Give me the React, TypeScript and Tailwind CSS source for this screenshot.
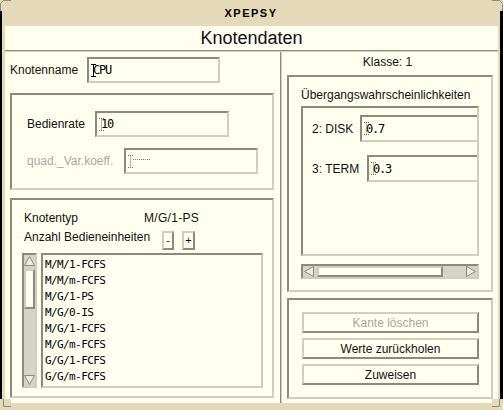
import React from "react";

// Motif-style bevels: sunken = dark top/left, light bottom/right; raised is the reverse.
const sunken =
  "border-2 border-t-[#8b8b7b] border-l-[#8b8b7b] border-b-[#cfcfbf] border-r-[#cfcfbf]";
const raised =
  "border-2 border-t-[#cfcfbf] border-l-[#cfcfbf] border-b-[#8b8b7b] border-r-[#8b8b7b]";

const mono = "font-['DejaVu_Sans_Mono',monospace]";

function Caret({ dim }: { dim?: boolean }) {
  return (
    <svg width="5" height="13" viewBox="0 0 5 13" className="shrink-0">
      <path
        d="M0 0.5H5M2.5 0.5V12.5M0 12.5H5"
        stroke={dim ? "#6f6f63" : "#000"}
        strokeWidth="1"
        strokeDasharray={dim ? "1 1" : undefined}
        fill="none"
      />
    </svg>
  );
}

function Field({
  className,
  value,
  dim,
  blank,
}: {
  className: string;
  value?: string;
  dim?: boolean;
  blank?: boolean;
}) {
  return (
    <div className={`${sunken} flex items-center pl-[2px] bg-[#fffff0] shrink-0 ${className}`}>
      <Caret dim={dim} />
      {value && (
        <span className={`-ml-[3px] ${mono} text-[12px] tracking-[-1.2px] text-black`}>
          {value}
        </span>
      )}
      {blank && <span className="w-[17px] mb-[3px] border-t border-dotted border-[#77776b]" />}
    </div>
  );
}

function ArrowUp() {
  return (
    <svg width="11" height="10" viewBox="0 0 11 10">
      <polygon points="5.5,0.5 10.5,9.5 0.5,9.5" fill="#ececdc" stroke="#8b8b7b" />
    </svg>
  );
}

function ArrowDown() {
  return (
    <svg width="11" height="10" viewBox="0 0 11 10">
      <polygon points="0.5,0.5 10.5,0.5 5.5,9.5" fill="#ececdc" stroke="#8b8b7b" />
    </svg>
  );
}

function ArrowLeft() {
  return (
    <svg width="10" height="11" viewBox="0 0 10 11">
      <polygon points="0.5,5.5 9.5,0.5 9.5,10.5" fill="#ececdc" stroke="#8b8b7b" />
    </svg>
  );
}

function ArrowRight() {
  return (
    <svg width="10" height="11" viewBox="0 0 10 11">
      <polygon points="0.5,0.5 9.5,5.5 0.5,10.5" fill="#ececdc" stroke="#8b8b7b" />
    </svg>
  );
}

function VScroll() {
  return (
    <div className={`${sunken} w-[15px] h-[135px] bg-[#d5d5c5] flex flex-col items-center shrink-0`}>
      <div className="mt-[1px]">
        <ArrowUp />
      </div>
      <div className={`${raised} mt-[3px] w-[11px] h-[40px] bg-[#fffff0]`} />
      <div className="mt-auto mb-[1px]">
        <ArrowDown />
      </div>
    </div>
  );
}

function HScroll() {
  return (
    <div className={`${sunken} mt-[8px] ml-[12px] w-[178px] h-[15px] bg-[#d5d5c5] flex items-center`}>
      <div className="ml-[1px] flex">
        <ArrowLeft />
      </div>
      <div className={`${raised} ml-[3px] w-[126px] h-[11px] bg-[#fffff0]`} />
      <div className="ml-auto mr-[1px] flex">
        <ArrowRight />
      </div>
    </div>
  );
}

const nodeTypes = [
  "M/M/1-FCFS",
  "M/M/m-FCFS",
  "M/G/1-PS",
  "M/G/0-IS",
  "M/G/1-FCFS",
  "M/G/m-FCFS",
  "G/G/1-FCFS",
  "G/G/m-FCFS",
];

function LeftColumn() {
  return (
    <div className="w-[275px] flex flex-col">
      <div className="flex items-center pt-[5px] pl-[5px]">
        <span className="w-[77px]">Knotenname</span>
        <Field className="w-[133px] h-[26px]" value="CPU" />
      </div>

      <div className={`${sunken} ml-[5px] mt-[10px] w-[264px] h-[97px] flex flex-col`}>
        <div className="flex items-center pt-[16px] pl-[15px]">
          <span className="w-[68px]">Bedienrate</span>
          <Field className="w-[134px] h-[26px]" value="10" dim />
        </div>
        <div className="flex items-center mt-[11px] pl-[15px]">
          <span className="w-[97px] text-[#a9a99b]">quad._Var.koeff.</span>
          <Field className="w-[134px] h-[26px]" dim blank />
        </div>
      </div>

      <div className={`${sunken} ml-[5px] mt-[8px] w-[264px] h-[200px] flex flex-col`}>
        <div className="flex pt-[11px] pl-[12px]">
          <span className="w-[120px]">Knotentyp</span>
          <span className="tracking-[0.3px]">M/G/1-PS</span>
        </div>
        <div className="flex items-start h-[19px] mt-[6px] pl-[12px]">
          <span className="w-[138px] -mt-[1px]">Anzahl Bedieneinheiten</span>
          <div className={`${raised} w-[12px] h-[19px] flex items-center justify-center text-[11px] leading-none`}>
            -
          </div>
          <div className={`${raised} ml-[8px] w-[13px] h-[19px] flex items-center justify-center text-[11px] leading-none`}>
            +
          </div>
        </div>
        <div className="flex mt-[3px] pl-[10px]">
          <VScroll />
          <div className={`${sunken} ml-[4px] w-[222px] h-[135px] pl-[2px] pt-[2px] flex flex-col overflow-hidden`}>
            {nodeTypes.map((t) => (
              <div key={t} className={`h-[16px] flex items-center ${mono} text-[11px] tracking-[-0.6px] text-black`}>
                {t}
              </div>
            ))}
          </div>
        </div>
      </div>
    </div>
  );
}

function RightColumn() {
  return (
    <div className="flex-1 flex flex-col">
      <div className="h-[23px] flex justify-center pt-[3px] pr-[5px]">Klasse: 1</div>

      <div className={`${sunken} ml-[5px] w-[206px] h-[217px] flex flex-col`}>
        <div className="pt-[11px] pl-[12px] whitespace-nowrap">Übergangswahrscheinlichkeiten</div>
        <div className={`${sunken} mt-[4px] ml-[12px] w-[178px] h-[150px] overflow-hidden flex flex-col`}>
          <div className="flex items-center pt-[7px] pl-[9px]">
            <span className="w-[48px] shrink-0">2: DISK</span>
            <Field className="w-[140px] h-[27px]" value="0.7" dim />
          </div>
          <div className="flex items-center mt-[13px] pl-[9px]">
            <span className="w-[55px] shrink-0">3: TERM</span>
            <Field className="w-[140px] h-[27px]" value="0.3" dim />
          </div>
        </div>
        <HScroll />
      </div>

      <div className={`${sunken} ml-[5px] mt-[6px] w-[206px] h-[101px] flex flex-col gap-[5px] pt-[12px] pl-[13px]`}>
        <div className={`${raised} w-[177px] h-[21px] flex items-center justify-center text-[#a9a99b]`}>
          Kante löschen
        </div>
        <div className={`${raised} w-[177px] h-[21px] flex items-center justify-center`}>
          Werte zurückholen
        </div>
        <div className={`${raised} w-[177px] h-[21px] flex items-center justify-center`}>
          Zuweisen
        </div>
      </div>
    </div>
  );
}

export default function App() {
  return (
    <div className="relative w-[503px] h-[410px] bg-[#e5d9b9] border-l-2 border-r-[3px] border-black flex flex-col font-['Liberation_Sans',Arial,sans-serif] text-[12px] leading-[14px] text-[#111]">
      {/* window corner resize handles */}
      <div className="absolute -left-[2px] top-0 w-[11px] h-[11px] bg-[#e5d9b9]">
        <svg width="11" height="11" viewBox="0 0 11 11">
          <path d="M0.5 11V3.5L3.5 0.5H11" stroke="#8b8b7b" fill="none" />
        </svg>
      </div>
      <div className="absolute -right-[3px] top-0 w-[11px] h-[11px] bg-[#e5d9b9]">
        <svg width="11" height="11" viewBox="0 0 11 11">
          <path d="M0 0.5H7.5L10.5 3.5V11" stroke="#8b8b7b" fill="none" />
        </svg>
      </div>
      <div className="absolute -left-[2px] bottom-0 w-[11px] h-[11px] bg-[#e5d9b9]">
        <svg width="11" height="11" viewBox="0 0 11 11">
          <path d="M3.5 0V7.5H11" stroke="#8b8b7b" fill="none" />
        </svg>
      </div>
      <div className="absolute -right-[3px] bottom-0 w-[11px] h-[11px] bg-[#e5d9b9]">
        <svg width="11" height="11" viewBox="0 0 11 11">
          <path d="M0 7.5H7.5V0" stroke="#8b8b7b" fill="none" />
        </svg>
      </div>

      <div className="h-[26px] flex items-center justify-center font-bold text-[11px] tracking-[1.5px] text-black">
        XPEPSY
      </div>

      <div className="ml-[3px] mr-[2px] h-[377px] bg-[#fffff0] flex flex-col">
        <div className="h-[24px] flex items-center justify-center text-[18px] leading-[20px] text-[#120c18]">
          Knotendaten
        </div>
        <div className="h-px bg-[#8b8b7b]" />
        <div className="h-px bg-[#cfcfbf]" />
        <div className="flex flex-1">
          <LeftColumn />
          <div className="w-px bg-[#8b8b7b]" />
          <div className="w-px bg-[#cfcfbf]" />
          <RightColumn />
        </div>
      </div>
    </div>
  );
}
